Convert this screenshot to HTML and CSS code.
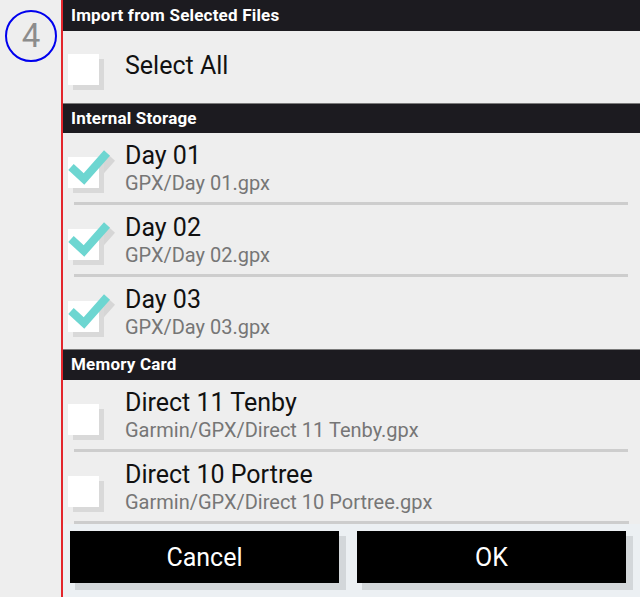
FILE: index.html
```html
<!DOCTYPE html>
<html>
<head>
<meta charset="utf-8">
<link rel="stylesheet" href="styles.css">
</head>
<body>
<div class="screen">
  <div class="gutter">
    <div class="step">4</div>
  </div>
  <div class="panel">
    <div class="header">Import from Selected Files</div>
    <div class="row row-single">
      <svg class="cb" viewBox="0 0 31 31" width="31" height="31">
        <rect x="5" y="5" width="31" height="31" fill="#d9d9d9"/>
        <rect x="0" y="0" width="31" height="31" fill="#ffffff"/>
      </svg>
      <div class="single-label">Select All</div>
    </div>

    <div class="header section">Internal Storage</div>
    <div class="row">
      <svg class="cb" viewBox="0 0 31 31" width="31" height="31">
        <polyline points="8,15 21,27 44,1" fill="none" stroke="#d6d6d6" stroke-width="8"/>
        <rect x="5" y="5" width="31" height="31" fill="#d9d9d9"/>
        <rect x="0" y="0" width="31" height="31" fill="#ffffff"/>
        <polyline points="3,10 16,22 39,-4" fill="none" stroke="#6dd6d1" stroke-width="8"/>
      </svg>
      <div class="text">
        <div class="title">Day 01</div>
        <div class="sub">GPX/Day 01.gpx</div>
      </div>
    </div>
    <div class="divider"></div>
    <div class="row">
      <svg class="cb" viewBox="0 0 31 31" width="31" height="31">
        <polyline points="8,15 21,27 44,1" fill="none" stroke="#d6d6d6" stroke-width="8"/>
        <rect x="5" y="5" width="31" height="31" fill="#d9d9d9"/>
        <rect x="0" y="0" width="31" height="31" fill="#ffffff"/>
        <polyline points="3,10 16,22 39,-4" fill="none" stroke="#6dd6d1" stroke-width="8"/>
      </svg>
      <div class="text">
        <div class="title">Day 02</div>
        <div class="sub">GPX/Day 02.gpx</div>
      </div>
    </div>
    <div class="divider"></div>
    <div class="row row-last">
      <svg class="cb" viewBox="0 0 31 31" width="31" height="31">
        <polyline points="8,15 21,27 44,1" fill="none" stroke="#d6d6d6" stroke-width="8"/>
        <rect x="5" y="5" width="31" height="31" fill="#d9d9d9"/>
        <rect x="0" y="0" width="31" height="31" fill="#ffffff"/>
        <polyline points="3,10 16,22 39,-4" fill="none" stroke="#6dd6d1" stroke-width="8"/>
      </svg>
      <div class="text">
        <div class="title">Day 03</div>
        <div class="sub">GPX/Day 03.gpx</div>
      </div>
    </div>

    <div class="header section section-tall">Memory Card</div>
    <div class="row">
      <svg class="cb" viewBox="0 0 31 31" width="31" height="31">
        <rect x="5" y="5" width="31" height="31" fill="#d9d9d9"/>
        <rect x="0" y="0" width="31" height="31" fill="#ffffff"/>
      </svg>
      <div class="text">
        <div class="title">Direct 11 Tenby</div>
        <div class="sub">Garmin/GPX/Direct 11 Tenby.gpx</div>
      </div>
    </div>
    <div class="divider"></div>
    <div class="row">
      <svg class="cb" viewBox="0 0 31 31" width="31" height="31">
        <rect x="5" y="5" width="31" height="31" fill="#d9d9d9"/>
        <rect x="0" y="0" width="31" height="31" fill="#ffffff"/>
      </svg>
      <div class="text">
        <div class="title">Direct 10 Portree</div>
        <div class="sub">Garmin/GPX/Direct 10 Portree.gpx</div>
      </div>
    </div>
    <div class="divider divider-last"></div>

    <div class="footer">
      <div class="btn">Cancel</div>
      <div class="btn">OK</div>
    </div>
  </div>
</div>
</body>
</html>
```

FILE: styles.css
```css
html, body {
  margin: 0;
  padding: 0;
  background: #eeeeee;
  overflow: hidden;
}

.screen {
  display: flex;
  width: 640px;
  height: 597px;
  font-family: Roboto, "Liberation Sans", sans-serif;
  background: #eeeeee;
}

.gutter {
  width: 61px;
  flex: none;
  border-right: 2px solid #e3262c;
  background: #eeeeee;
}

.step {
  width: 48px;
  height: 48px;
  margin: 10px 0 0 5px;
  border: 2px solid #0000ee;
  border-radius: 50%;
  color: #8c8c8c;
  font-size: 33px;
  line-height: 48px;
  text-align: center;
}

.panel {
  flex: 1;
  display: flex;
  flex-direction: column;
  background: #eeeeee;
}

.header {
  height: 31px;
  flex: none;
  box-sizing: border-box;
  padding-left: 8px;
  background: #1c1b20;
  color: #ffffff;
  font-weight: 700;
  font-size: 17px;
  letter-spacing: 0.2px;
  line-height: 30px;
}

.section {
  height: 30px;
  border-top: 1px solid #7a7a7a;
  line-height: 28px;
}

.section-tall {
  height: 31px;
  line-height: 29px;
}

.row {
  height: 69px;
  flex: none;
  display: flex;
  align-items: flex-start;
  padding-left: 5px;
}

.row-single {
  height: 72px;
}

.row-last {
  height: 72px;
}

.cb {
  flex: none;
  overflow: visible;
  margin-top: 24px;
  margin-right: 26px;
}

.row-single .cb {
  margin-top: 23px;
}

.single-label {
  margin-top: 21px;
  font-size: 25px;
  line-height: 28px;
  color: #111111;
}

.text {
  padding-top: 9px;
}

.title {
  font-size: 25px;
  line-height: 28px;
  color: #111111;
}

.sub {
  margin-top: 2px;
  font-size: 20px;
  line-height: 22px;
  color: #767676;
}

.divider {
  height: 3px;
  flex: none;
  margin: 0 12px 0 11px;
  background: #cdcdcd;
}

.divider-last {
  margin-right: 11px;
}

.footer {
  flex: 1;
  display: flex;
  gap: 18px;
  padding: 7px 14px 0 7px;
  background: #ecf0f3;
}

.btn {
  flex: 1;
  height: 52px;
  background: #000000;
  color: #ffffff;
  font-size: 25px;
  line-height: 53px;
  text-align: center;
  box-shadow: 6px 6px 0 1px #d3d7da;
}
```
